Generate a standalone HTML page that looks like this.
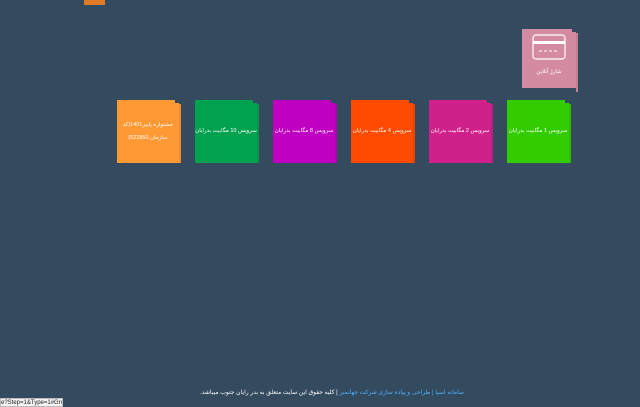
<!DOCTYPE html>
<html><head><meta charset="utf-8"><style>
body{margin:0;width:640px;height:407px;background:#344a5f;font-family:"Liberation Sans","DejaVu Sans",sans-serif;position:relative;overflow:hidden}
.t{position:absolute;top:100px;width:62px;height:63px;color:#fff;font-size:5.5px;display:flex;align-items:center;justify-content:center;text-align:center;line-height:13px;direction:rtl;white-space:nowrap}
.t:after{content:"";position:absolute;right:-2px;top:4px;width:2px;height:59px;background:inherit;filter:brightness(.92)}
.t:before{content:"";position:absolute;right:0;top:0;width:4px;height:3px;background:#344a5f}
</style></head><body>
<div style="position:absolute;left:84px;top:0;width:21px;height:5px;background:#e07b25"></div>
<div class="t" style="left:522px;top:29px;height:59px;width:54px;background:#d48ba1;flex-direction:column">
<svg width="34" height="26" viewBox="0 0 34 26" style="margin-top:-4px"><rect x="1" y="1" width="32" height="24" rx="3" fill="none" stroke="#fff" stroke-width="1.2"/><rect x="1" y="7" width="32" height="3" fill="#fff"/><path d="M7 17h3M12 17h3M17 17h3M22 17h3" stroke="#fff"/></svg>
<div style="margin-top:6px">شارژ آنلاین</div></div>
<div class="t" style="left:117px;background:#ff9933">جشنواره پاییز1401(کد<br>سازمان 522850)</div>
<div class="t" style="left:195px;background:#00a24f">سرویس 10 مگابیت بدرایان</div>
<div class="t" style="left:273px;background:#c000c0">سرویس 8 مگابیت بدرایان</div>
<div class="t" style="left:351px;background:#ff4a00">سرویس 4 مگابیت بدرایان</div>
<div class="t" style="left:429px;background:#d0208c">سرویس 2 مگابیت بدرایان</div>
<div class="t" style="left:507px;background:#33cc00">سرویس 1 مگابیت بدرایان</div>
<div style="position:absolute;left:226px;top:389px;width:238px;font-size:6px;color:#fff;direction:rtl;white-space:nowrap"><span style="color:#4db2ff">سامانه اسپا | طراحی و پیاده سازی شرکت جهانمبر</span> | کلیه حقوق این سایت متعلق به بدر رایان جنوب میباشد.</div>
<div style="position:absolute;left:0;top:398px;width:63px;height:9px;background:#f3f3f3;border:1px solid #bbb;box-sizing:border-box;font-size:6px;line-height:8px;color:#222;white-space:nowrap;overflow:hidden">e?Step=1&amp;Type=1#Group</div>
</body></html>
